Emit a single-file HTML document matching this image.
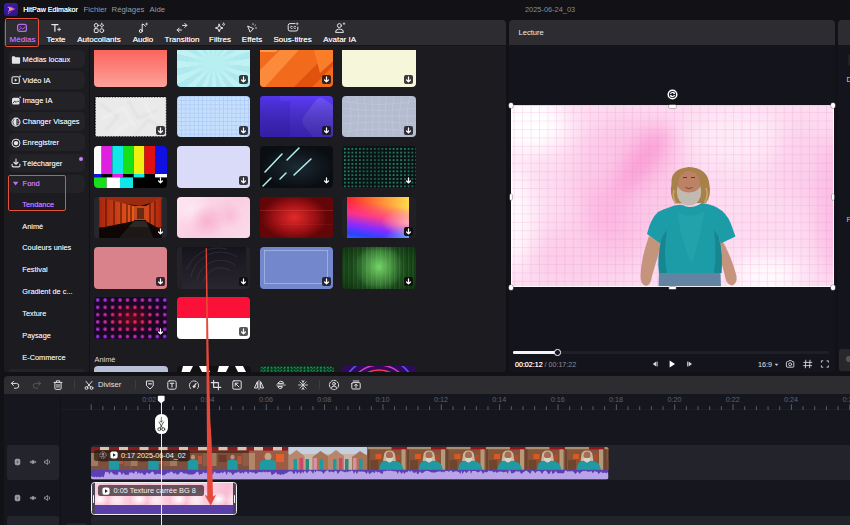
<!DOCTYPE html>
<html lang="fr"><head><meta charset="utf-8"><title>HitPaw Edimakor</title>
<style>
html,body{margin:0;padding:0}
body{width:850px;height:525px;background:#111116;overflow:hidden;position:relative;font-family:"Liberation Sans",sans-serif;color:#e4e4e8;font-size:8px;line-height:1}
.a{position:absolute}
.t{position:absolute;white-space:nowrap;line-height:10px;height:10px}
.c{transform:translateX(-50%)}
.pan{background:#1b1b20}
.bar{background:#2c2c31}
.btn{position:absolute;left:9px;width:76px;height:18.2px;background:#222227;border-radius:5px}
.btn span{text-shadow:0 0 .3px currentColor;position:absolute;left:13.6px;top:4.700px;font-size:7.45px;line-height:10px;color:#dcdce0;white-space:nowrap}
.btn svg{position:absolute;left:1.800px;top:4.400px}
.sub{text-shadow:0 0 .3px currentColor;position:absolute;left:22.3px;white-space:nowrap;font-size:7.35px;line-height:10px;color:#d8d8dc}
.th{position:absolute;width:73.4px;height:41.6px;border-radius:4px;overflow:hidden}
.dl{position:absolute;right:2.4px;bottom:2.6px;width:9px;height:9px;border-radius:2px;background:rgba(18,18,22,.82)}
.tab{text-shadow:0 0 .3px currentColor;position:absolute;top:34.5px;font-size:8px;line-height:10px;color:#ececf0;white-space:nowrap;transform:translateX(-50%)}
.ti{position:absolute;top:22px}
svg{display:block}
.ic{fill:none;stroke:#e8e8ec;stroke-width:1;stroke-linecap:round;stroke-linejoin:round}
</style></head><body>
<div class="a" style="left:4px;top:3px;width:14px;height:13px;border-radius:3px;background:linear-gradient(160deg,#3e1ea4,#2c1480)"></div>
<svg class="a" style="left:4px;top:3px" width="14" height="13" viewBox="0 0 14 13"><path d="M6.400 3.400 L11.400 6 L6.400 8.600 Z" fill="#d24cf0"/><path d="M5 3.800 L9 6 L5 8.200 Z" fill="#ff9a3c"/><circle cx="4.400" cy="4.200" r=".8" fill="#a88cff"/><circle cx="4.600" cy="8.200" r=".6" fill="#a88cff"/><circle cx="4.400" cy="10.200" r=".6" fill="#9a7cf5"/><circle cx="6" cy="9.600" r=".5" fill="#9a7cf5"/></svg>
<div class="t" style="left:23.2px;top:5px;font-size:7.15px;color:#f4f4f7;text-shadow:0 0 .2px #fff">HitPaw Edimakor</div>
<div class="t" style="left:83.5px;top:5px;font-size:7.8px;color:#9a9aa2">Fichier</div>
<div class="t" style="left:111.5px;top:5px;font-size:7.8px;color:#9a9aa2">Réglages</div>
<div class="t" style="left:149.5px;top:5px;font-size:7.8px;color:#9a9aa2">Aide</div>
<div class="t" style="left:525px;top:4.5px;font-size:7.4px;color:#8c8c94">2025-06-24_03</div>
<div class="a pan" style="left:4.300px;top:20px;width:501.700px;height:352px;border-radius:4px 4px 3px 3px"></div>
<div class="a" style="left:88.5px;top:45px;width:1.5px;height:327px;background:#121216"></div>
<div class="th" style="left:94px;top:45.3px;background:linear-gradient(#fb5c54,#fda29a)"></div>
<div class="th" style="left:176.8px;top:45.3px;background:radial-gradient(ellipse 34% 36% at 50% 44%,#b8eff1 35%,rgba(184,239,241,0)),repeating-conic-gradient(from 4deg at 50% 44%,#aeeaed 0 11.25deg,#c2f1f3 11.25deg 22.5deg)"><div class="dl"><svg width="9" height="9" viewBox="0 0 8 8"><path d="M4 1.7V6M2.3 4.4 4 6.1 5.700 4.4" fill="none" stroke="#fff" stroke-width="1.1" stroke-linecap="round" stroke-linejoin="round"/></svg></div></div>
<div class="th" style="left:259.5px;top:45.3px;"><svg width="74" height="42" viewBox="0 0 74 42"><rect width="74" height="42" fill="#f26a1c"/><path d="M-5 30 L30 -5 L48 -5 L5 42 L-5 42Z" fill="#fb8a3a"/><path d="M30 46 L74 2 L74 20 L48 46Z" fill="#e0520e"/><path d="M52 -2 L80 -2 L80 10 L60 28Z" fill="#fa7e2a"/><rect x="-2" y="-2" width="20" height="9" rx="4" fill="#f89a50"/></svg><div class="dl"><svg width="9" height="9" viewBox="0 0 8 8"><path d="M4 1.7V6M2.3 4.4 4 6.1 5.700 4.4" fill="none" stroke="#fff" stroke-width="1.1" stroke-linecap="round" stroke-linejoin="round"/></svg></div></div>
<div class="th" style="left:342.2px;top:45.3px;background:#f5f6da"><div class="dl"><svg width="9" height="9" viewBox="0 0 8 8"><path d="M4 1.7V6M2.3 4.4 4 6.1 5.700 4.4" fill="none" stroke="#fff" stroke-width="1.1" stroke-linecap="round" stroke-linejoin="round"/></svg></div></div>
<div class="th" style="left:94px;top:95.7px;"><svg width="74" height="42" viewBox="0 0 74 42"><defs><filter id="pbl"><feGaussianBlur stdDeviation=".8"/></filter></defs><rect width="74" height="42" fill="#0e0e12"/><rect x="1.300" y="1" width="71" height="39.600" fill="#eaeaea"/><g filter="url(#pbl)" fill="none" stroke-width="1.600"><path d="M6 8 L24 20 L12 34 M34 4 L44 22 L64 14 M40 40 L54 24 L70 32" stroke="#dedede"/><path d="M8 22 L30 12 L40 30 M50 6 L58 20 M20 38 L34 28" stroke="#f2f2f2"/></g><rect x="1.300" y="1" width="71" height="39.600" fill="none" stroke="#0e0e12" stroke-width=".9" stroke-dasharray="1.100 1.700"/></svg><div class="dl"><svg width="9" height="9" viewBox="0 0 8 8"><path d="M4 1.7V6M2.3 4.4 4 6.1 5.700 4.4" fill="none" stroke="#fff" stroke-width="1.1" stroke-linecap="round" stroke-linejoin="round"/></svg></div></div>
<div class="th" style="left:176.8px;top:95.7px;background-color:#c6dffc;background-image:linear-gradient(#aecdf6 .6px,transparent .6px),linear-gradient(90deg,#aecdf6 .6px,transparent .6px);background-size:4.2px 4.2px"><div class="dl"><svg width="9" height="9" viewBox="0 0 8 8"><path d="M4 1.7V6M2.3 4.4 4 6.1 5.700 4.4" fill="none" stroke="#fff" stroke-width="1.1" stroke-linecap="round" stroke-linejoin="round"/></svg></div></div>
<div class="th" style="left:259.5px;top:95.7px;"><svg width="74" height="42" viewBox="0 0 74 42"><defs><linearGradient id="pv" x1="0" y1="0" x2="0" y2="1"><stop offset="0" stop-color="#000" stop-opacity="0"/><stop offset="1" stop-color="#1a0a70" stop-opacity=".55"/></linearGradient></defs><rect width="74" height="42" fill="#5c3cf6"/><path d="M0 0 H20 V3 Q20 5 24 5 H30 V42 H0Z" fill="#5234ea"/><path d="M44 20 L56 4 Q60 0 64 3 L74 10 V42 H54 L44 30 Q41 25 44 20Z" fill="#6e52fb"/><rect width="74" height="42" fill="url(#pv)"/></svg><div class="dl"><svg width="9" height="9" viewBox="0 0 8 8"><path d="M4 1.7V6M2.3 4.4 4 6.1 5.700 4.4" fill="none" stroke="#fff" stroke-width="1.1" stroke-linecap="round" stroke-linejoin="round"/></svg></div></div>
<div class="th" style="left:342.2px;top:95.7px;"><svg width="74" height="42" viewBox="0 0 74 42"><rect width="74" height="42" fill="#b4bcd0"/><g stroke="#c6cde0" stroke-width=".5" fill="none"><path d="M0 5 Q37 12 74 5M0 12 Q37 17 74 12M0 20 H74M0 28 Q37 24 74 28M0 36 Q37 30 74 36"/><path d="M6 0 Q12 21 6 42M14 0 Q19 21 14 42M22 0 Q26 21 22 42M30 0 Q32 21 30 42M37 0V42M44 0 Q42 21 44 42M52 0 Q48 21 52 42M60 0 Q55 21 60 42M68 0 Q62 21 68 42"/></g></svg><div class="dl"><svg width="9" height="9" viewBox="0 0 8 8"><path d="M4 1.7V6M2.3 4.4 4 6.1 5.700 4.4" fill="none" stroke="#fff" stroke-width="1.1" stroke-linecap="round" stroke-linejoin="round"/></svg></div></div>
<div class="th" style="left:94px;top:146.2px;"><svg width="74" height="42" viewBox="0 0 74 42"><rect width="74" height="42" fill="#000"/><rect x="0" width="7.6" height="28" fill="#fff"/><rect x="7.6" width="10.7" height="28" fill="#e020e0"/><rect x="18.3" width="10.7" height="28" fill="#10e8e8"/><rect x="29" width="10.7" height="28" fill="#18e018"/><rect x="39.7" width="10.7" height="28" fill="#f0f010"/><rect x="50.4" width="10.7" height="28" fill="#e01010"/><rect x="61.1" width="13" height="28" fill="#1010e0"/><rect x="0" y="28" width="7.6" height="3.400" fill="#1010e0"/><rect x="18.3" y="28" width="10.7" height="3.400" fill="#e020e0"/><rect x="39.7" y="28" width="10.7" height="3.400" fill="#10e8e8"/><rect x="61.1" y="28" width="13" height="3.400" fill="#fff"/><rect y="31.400" width="12.600" height="10.600" fill="#18e018"/><rect x="12.600" y="31.400" width="13.400" height="10.600" fill="#fff"/><rect x="26" y="31.400" width="13" height="10.600" fill="#10e8e8"/></svg><div class="dl" style="background:transparent"><svg width="9" height="9" viewBox="0 0 8 8"><path d="M4 1.7V6M2.3 4.4 4 6.1 5.700 4.4" fill="none" stroke="#fff" stroke-width="1.1" stroke-linecap="round" stroke-linejoin="round"/></svg></div></div>
<div class="th" style="left:176.8px;top:146.2px;background:#d9dbf8"><div class="dl"><svg width="9" height="9" viewBox="0 0 8 8"><path d="M4 1.7V6M2.3 4.4 4 6.1 5.700 4.4" fill="none" stroke="#fff" stroke-width="1.1" stroke-linecap="round" stroke-linejoin="round"/></svg></div></div>
<div class="th" style="left:259.5px;top:146.2px;"><svg width="74" height="42" viewBox="0 0 74 42"><defs><radialGradient id="g22"><stop offset="0" stop-color="#1c2a32"/><stop offset="1" stop-color="#0a0e12"/></radialGradient></defs><rect width="74" height="42" fill="url(#g22)"/><g stroke="#b4f0f0" stroke-width="1.500" stroke-linecap="round"><path d="M5 26 L22 8M27 14 L39 2M3 40 L11 32M20 33 L26 27M34 29 L51 13"/></g></svg><div class="dl" style="background:transparent"><svg width="9" height="9" viewBox="0 0 8 8"><path d="M4 1.7V6M2.3 4.4 4 6.1 5.700 4.4" fill="none" stroke="#fff" stroke-width="1.1" stroke-linecap="round" stroke-linejoin="round"/></svg></div></div>
<div class="th" style="left:342.2px;top:146.2px;background-color:#0b1216;background-image:linear-gradient(100deg,rgba(11,18,22,0),rgba(11,18,22,.4) 45%,rgba(11,18,22,.05) 70%,rgba(11,18,22,.3)),radial-gradient(circle,#34c888 .5px,transparent .95px);background-size:100% 100%,3.75px 3.75px;background-position:0 0,1px 1px"><div class="dl" style="background:transparent"><svg width="9" height="9" viewBox="0 0 8 8"><path d="M4 1.7V6M2.3 4.4 4 6.1 5.700 4.4" fill="none" stroke="#fff" stroke-width="1.1" stroke-linecap="round" stroke-linejoin="round"/></svg></div></div>
<div class="th" style="left:94px;top:196.7px;"><svg width="74" height="42" viewBox="0 0 74 42"><defs><linearGradient id="tg" x1="0" y1="0" x2="1" y2="0"><stop offset="0" stop-color="#a8240c"/><stop offset="1" stop-color="#e85a1c"/></linearGradient><linearGradient id="tg2" x1="1" y1="0" x2="0" y2="0"><stop offset="0" stop-color="#a8240c"/><stop offset="1" stop-color="#d8481a"/></linearGradient></defs><rect width="74" height="42" fill="#26262b"/><rect x="5.2" width="62.400" height="42" fill="#120806"/><path d="M5.2 0 H67.600 V3 L46 9 L5.2 3Z" fill="#9a2a10"/><path d="M5.2 0 L40 9 V24 L5.2 31Z" fill="url(#tg)"/><path d="M67.600 0 L52 9 V24 L67.600 33Z" fill="url(#tg2)"/><path d="M12 1.800 V30 M20 4 V28.500 M27 5.800 V27 M33 7.200 V25.800 M37 8.200 V25 M61 4 V29 M56 6.800 V26.500" stroke="#5a1206" stroke-width="1.100"/><rect x="40" y="9" width="12" height="14" fill="#c04a1a"/><rect x="43" y="11" width="7" height="11" fill="#6a2a12"/><path d="M40 24 H52 L60 42 H24Z" fill="#2c2826"/><rect x="5.2" y="30" width="62.400" height="12" fill="#0a0504" opacity=".45"/></svg><div class="dl" style="background:transparent"><svg width="9" height="9" viewBox="0 0 8 8"><path d="M4 1.7V6M2.3 4.4 4 6.1 5.700 4.4" fill="none" stroke="#fff" stroke-width="1.1" stroke-linecap="round" stroke-linejoin="round"/></svg></div></div>
<div class="th" style="left:176.8px;top:196.7px;background:radial-gradient(ellipse 24% 40% at 42% 58%,rgba(247,170,203,.75),transparent),radial-gradient(ellipse 18% 32% at 72% 45%,rgba(248,182,210,.7),transparent),radial-gradient(ellipse 30% 40% at 18% 28%,#fde8f2,transparent),linear-gradient(135deg,#fde2ee,#fbcce0 50%,#fcdcea)"></div>
<div class="th" style="left:259.5px;top:196.7px;background:radial-gradient(ellipse 45% 55% at 47% 50%,#e42a2a,#9a1014 65%,#640608)"><div class="a" style="left:0;top:13.500px;width:74px;height:.5px;background:rgba(255,120,110,.2)"></div><div class="a" style="left:20px;top:27px;width:54px;height:.5px;background:rgba(255,110,100,.08)"></div></div>
<div class="th" style="left:342.2px;top:196.7px;background:#202025"><div class="a" style="left:5px;top:0;width:62px;height:41.5px;background:radial-gradient(ellipse 45% 35% at 100% 62%,rgba(255,200,190,.8),transparent),radial-gradient(ellipse 40% 30% at 100% 100%,rgba(90,180,255,.9),transparent),linear-gradient(190deg,transparent 22%,rgba(255,50,150,.85) 50%,#8a2cff 72%,#2a44ff 90%,#2a60ff),linear-gradient(90deg,#ff2028,#ff7a30 45%,#ffdc50)"></div><div class="dl" style="background:#111"><svg width="9" height="9" viewBox="0 0 8 8"><path d="M4 1.7V6M2.3 4.4 4 6.1 5.700 4.4" fill="none" stroke="#fff" stroke-width="1.1" stroke-linecap="round" stroke-linejoin="round"/></svg></div></div>
<div class="th" style="left:94px;top:247px;background:#d9828c"><div class="dl"><svg width="9" height="9" viewBox="0 0 8 8"><path d="M4 1.7V6M2.3 4.4 4 6.1 5.700 4.4" fill="none" stroke="#fff" stroke-width="1.1" stroke-linecap="round" stroke-linejoin="round"/></svg></div></div>
<div class="th" style="left:176.8px;top:247px;"><svg width="74" height="42" viewBox="0 0 74 42"><defs><linearGradient id="g41" x1="0" y1="0" x2="0" y2="1"><stop offset="0" stop-color="#15141c"/><stop offset="1" stop-color="#2b2630"/></linearGradient></defs><rect width="74" height="42" fill="#222227"/><rect x="5" width="64" height="42" fill="url(#g41)"/><g fill="none" stroke="#4a4654" stroke-width=".45"><path d="M14 30 A30 30 0 0 1 60 10"/><path d="M20 34 A24 24 0 0 1 58 18"/><path d="M26 36 A18 18 0 0 1 54 24"/><path d="M10 22 A34 34 0 0 1 50 2"/></g></svg><div class="dl" style="background:#111"><svg width="9" height="9" viewBox="0 0 8 8"><path d="M4 1.7V6M2.3 4.4 4 6.1 5.700 4.4" fill="none" stroke="#fff" stroke-width="1.1" stroke-linecap="round" stroke-linejoin="round"/></svg></div></div>
<div class="th" style="left:259.5px;top:247px;"><svg width="74" height="42" viewBox="0 0 74 42"><rect width="74" height="42" fill="#7388cc"/><rect x="4.5" y="3.5" width="63" height="33" fill="none" stroke="#b8c6ee" stroke-width=".6"/></svg><div class="dl"><svg width="9" height="9" viewBox="0 0 8 8"><path d="M4 1.7V6M2.3 4.4 4 6.1 5.700 4.4" fill="none" stroke="#fff" stroke-width="1.1" stroke-linecap="round" stroke-linejoin="round"/></svg></div></div>
<div class="th" style="left:342.2px;top:247px;background:radial-gradient(ellipse 70% 90% at 50% 50%,transparent 45%,rgba(2,16,2,.7)),radial-gradient(ellipse 32% 60% at 50% 47%,#74d468,transparent),repeating-linear-gradient(90deg,#1c4c1c 0 1.5px,#2a642a 1.5px 2.6px,#205420 2.6px 4.6px)"><div class="dl" style="background:#111"><svg width="9" height="9" viewBox="0 0 8 8"><path d="M4 1.7V6M2.3 4.4 4 6.1 5.700 4.4" fill="none" stroke="#fff" stroke-width="1.1" stroke-linecap="round" stroke-linejoin="round"/></svg></div></div>
<div class="th" style="left:94px;top:297.4px;"><svg width="74" height="42" viewBox="0 0 74 42"><defs><radialGradient id="dg" cx=".5" cy=".5" r=".6"><stop offset="0" stop-color="#f02030"/><stop offset=".45" stop-color="#e02868"/><stop offset="1" stop-color="#9a30f0"/></radialGradient><radialGradient id="dgc"><stop offset="0" stop-color="#6a0c20" stop-opacity=".7"/><stop offset="1" stop-color="#6a0c20" stop-opacity="0"/></radialGradient><pattern id="dp" width="7.45" height="7.3" x="0" y="-.6" patternUnits="userSpaceOnUse"><circle cx="3.7" cy="3.6" r="1.800" fill="#fff"/></pattern><mask id="dm"><rect width="74" height="42" fill="url(#dp)"/></mask><filter id="dgl"><feGaussianBlur stdDeviation=".7"/></filter></defs><rect width="74" height="42" fill="#1a0724"/><ellipse cx="37" cy="21" rx="22" ry="15" fill="url(#dgc)"/><g filter="url(#dgl)"><rect width="74" height="42" fill="url(#dg)" mask="url(#dm)"/></g></svg><div class="dl" style="background:transparent"><svg width="9" height="9" viewBox="0 0 8 8"><path d="M4 1.7V6M2.3 4.4 4 6.1 5.700 4.4" fill="none" stroke="#fff" stroke-width="1.1" stroke-linecap="round" stroke-linejoin="round"/></svg></div></div>
<div class="th" style="left:176.8px;top:297.4px;background:linear-gradient(#fb1038 0 49%,#fff 49%)"><div class="dl" style="background:#55555a"><svg width="9" height="9" viewBox="0 0 8 8"><path d="M4 1.7V6M2.3 4.4 4 6.1 5.700 4.4" fill="none" stroke="#fff" stroke-width="1.1" stroke-linecap="round" stroke-linejoin="round"/></svg></div></div>
<div class="t" style="left:94.5px;top:355px;font-size:7.4px;color:#dcdce0">Animé</div>
<div class="a" style="left:94px;top:366px;width:74px;height:6px;border-radius:4px 4px 0 0;overflow:hidden;background:#b8c0d8"></div>
<div class="a" style="left:176.8px;top:366px;width:74px;height:6px;border-radius:4px 4px 0 0;overflow:hidden;background:#111"><svg width="74" height="8" viewBox="0 0 74 8"><path d="M6 0 H16 L12 8 H4Z M22 0 H30 L34 8 H26Z M42 0 H52 L48 8 H40Z M58 0 H66 L70 8 H62Z" fill="#fff"/></svg></div>
<div class="a" style="left:259.5px;top:366px;width:74px;height:6px;border-radius:4px 4px 0 0;overflow:hidden;background:#0a2c1a"><div class="a" style="inset:0;background-image:radial-gradient(circle,#1e9a58 .6px,transparent 1.1px),radial-gradient(circle,#147a44 .7px,transparent 1.2px);background-size:3.3px 2.9px,4.1px 3.1px;background-position:0 0,1.5px 1px"></div></div>
<div class="a" style="left:342.2px;top:366px;width:74px;height:6px;border-radius:4px 4px 0 0;overflow:hidden;background:#300a5c"><svg width="74" height="8" viewBox="0 0 74 8"><circle cx="37" cy="30" r="26" fill="none" stroke="#ff3a4a" stroke-width="1.600"/><circle cx="37" cy="30" r="31" fill="none" stroke="#d040c0" stroke-width="1.600"/><circle cx="37" cy="30" r="38" fill="none" stroke="#5a50ff" stroke-width="1.600"/></svg></div>
<div class="a bar" style="left:4.300px;top:20px;width:501.700px;height:25px;border-radius:4px 4px 0 0"></div><div class="a" style="left:4.300px;top:45px;width:501.700px;height:1px;background:#141419"></div>
<div class="a pan" style="left:90px;top:46px;width:416px;height:4px"></div>
<div class="tab" style="left:22.5px;color:#b868f2">Médias</div>
<div class="tab" style="left:56px">Texte</div>
<div class="tab" style="left:99px">Autocollants</div>
<div class="tab" style="left:143px">Audio</div>
<div class="tab" style="left:182px">Transition</div>
<div class="tab" style="left:220px">Filtres</div>
<div class="tab" style="left:252px">Effets</div>
<div class="tab" style="left:292.6px">Sous-titres</div>
<div class="tab" style="left:339.7px">Avatar IA</div>
<svg class="ti" style="left:16.3px" width="12" height="12" viewBox="0 0 12 12" fill="none" stroke="#b868f2" stroke-width="1" stroke-linecap="round" stroke-linejoin="round"><rect x="1.600" y="2.400" width="8.800" height="7" rx="2" stroke-width="1.300"/><path d="M3.200 7.800 L5.200 5.800 L6.800 7 L8.800 5.200" stroke-width=".9"/><circle cx="4.200" cy="4.600" r=".6" fill="#b868f2" stroke="none"/></svg>
<svg class="ti" style="left:50px" width="12" height="12" viewBox="0 0 12 12" fill="none" stroke="#e8e8ec" stroke-width="1" stroke-linecap="round" stroke-linejoin="round"><path d="M1.8 2.6 H8 M4.9 2.6 V9.2" stroke-width="1.2"/><path d="M7.6 7.4 H10.6 M9.1 5.9 V8.9" stroke-width=".9"/></svg>
<svg class="ti" style="left:93px" width="12" height="12" viewBox="0 0 12 12" fill="none" stroke="#e8e8ec" stroke-width="1" stroke-linecap="round" stroke-linejoin="round"><circle cx="3.2" cy="3.4" r="1.9"/><path d="M8.8 1.2 L9.4 2.8 L11 3.4 L9.4 4 L8.8 5.6 L8.2 4 L6.6 3.4 L8.2 2.8Z" stroke-width=".7"/><rect x="1.3" y="6.7" width="3.8" height="3.8" rx=".8"/><circle cx="8.8" cy="8.6" r="1.9"/></svg>
<svg class="ti" style="left:137px" width="12" height="12" viewBox="0 0 12 12" fill="none" stroke="#e8e8ec" stroke-width="1" stroke-linecap="round" stroke-linejoin="round"><path d="M5.2 9 V2 Q7.4 2.2 8.4 4.2"/><circle cx="3.8" cy="9" r="1.5"/><path d="M9.6 1 V3 M8.6 2 H10.6" stroke-width=".7"/></svg>
<svg class="ti" style="left:176px" width="12" height="12" viewBox="0 0 12 12" fill="none" stroke="#e8e8ec" stroke-width="1" stroke-linecap="round" stroke-linejoin="round"><path d="M6.5 3.4 H10.8 M8.8 1.4 L10.8 3.4 L8.8 5.4"/><path d="M5.5 8 H1.2 M3.2 6 L1.2 8 L3.2 10"/></svg>
<svg class="ti" style="left:214px" width="12" height="12" viewBox="0 0 12 12" fill="none" stroke="#e8e8ec" stroke-width="1" stroke-linecap="round" stroke-linejoin="round"><path d="M5.2 2.2 L6.2 5 L9 6 L6.2 7 L5.2 9.8 L4.2 7 L1.4 6 L4.2 5Z"/><path d="M9.6 1 L10 2 L11 2.4 L10 2.8 L9.6 3.8 L9.2 2.8 L8.2 2.4 L9.2 2Z" stroke-width=".6"/></svg>
<svg class="ti" style="left:246px" width="12" height="12" viewBox="0 0 12 12" fill="none" stroke="#e8e8ec" stroke-width="1" stroke-linecap="round" stroke-linejoin="round"><path d="M2 4.2 L7.6 6.6 L4.4 9.8Z"/><path d="M7 1.6 V2.8 M9.6 3 L8.8 3.8 M10.6 6 H9.4" stroke-width=".8"/></svg>
<svg class="ti" style="left:286.6px" width="12" height="12" viewBox="0 0 12 12" fill="none" stroke="#e8e8ec" stroke-width="1" stroke-linecap="round" stroke-linejoin="round"><path d="M8 1.6 H3 Q1.2 1.6 1.2 3.4 V7.2 Q1.2 9 3 9 H9 Q10.8 9 10.8 7.2 V5"/><path d="M5.2 4.4 Q3.4 3.6 3.4 5.4 Q3.4 7 5.2 6.4 M8.6 4.4 Q6.8 3.6 6.8 5.4 Q6.8 7 8.6 6.4" stroke-width=".8"/><path d="M10.2 .8 V2.8 M9.2 1.8 H11.2" stroke-width=".7"/></svg>
<svg class="ti" style="left:333.7px" width="12" height="12" viewBox="0 0 12 12" fill="none" stroke="#e8e8ec" stroke-width="1" stroke-linecap="round" stroke-linejoin="round"><circle cx="5.4" cy="3.6" r="2"/><path d="M1.6 10 Q1.6 7.2 4.4 7.2 H6.6 Q9.4 7.2 9.4 10 Z"/><path d="M10 .8 V2.6 M9.1 1.7 H10.9" stroke-width=".7"/></svg>
<div class="a" style="left:5.2px;top:17.900px;width:31.6px;height:27.2px;border:1.800px solid #e6503c;border-radius:2px;box-sizing:content-box"></div>
<div class="btn" style="top:50.30px"><svg width="10" height="10" viewBox="0 0 9 9"><path d="M.8 2 Q.8 1.2 1.6 1.2 H3.2 L4 2 H7.4 Q8.2 2 8.2 2.8 V7 Q8.2 7.8 7.4 7.8 H1.6 Q.8 7.8 .8 7Z" fill="#e4e4e8"/></svg><span>Médias locaux</span></div>
<div class="btn" style="top:71.02px"><svg width="10" height="10" viewBox="0 0 9 9"><rect x=".9" y="1.6" width="6.6" height="6" rx="1.4" fill="none" stroke="#e4e4e8" stroke-width="1"/><path d="M3.4 3.2 V6 L5.6 4.6Z" fill="#e4e4e8"/><path d="M8.2 .4 V2 M7.4 1.2 H9" stroke="#e4e4e8" stroke-width=".6"/></svg><span>Vidéo IA</span></div>
<div class="btn" style="top:91.74px"><svg width="10" height="10" viewBox="0 0 9 9"><rect x=".9" y="1.6" width="6.8" height="6" rx="1.4" fill="#e4e4e8"/><path d="M1.6 6.6 L3.4 4.6 L4.6 5.8 L6 4.4 L7.2 5.6" stroke="#232328" stroke-width=".8" fill="none"/><path d="M8.2 .4 V2 M7.4 1.2 H9" stroke="#e4e4e8" stroke-width=".6"/></svg><span>Image IA</span></div>
<div class="btn" style="top:112.46px"><svg width="10" height="10" viewBox="0 0 9 9"><circle cx="4.5" cy="4.6" r="3.6" fill="none" stroke="#e4e4e8" stroke-width="1"/><path d="M4.5 1 V8.2" stroke="#e4e4e8" stroke-width=".8"/><path d="M4.5 1.4 A3.3 3.3 0 0 0 4.5 7.8Z" fill="#e4e4e8"/><path d="M5.6 3.6 H7 M5.6 5.6 H7" stroke="#e4e4e8" stroke-width=".7"/></svg><span>Changer Visages</span></div>
<div class="btn" style="top:133.18px"><svg width="10" height="10" viewBox="0 0 9 9"><circle cx="4.5" cy="4.6" r="3.6" fill="none" stroke="#e4e4e8" stroke-width=".9"/><circle cx="4.5" cy="4.6" r="2" fill="#e4e4e8"/></svg><span>Enregistrer</span></div>
<div class="btn" style="top:153.90px"><svg width="10" height="10" viewBox="0 0 9 9"><path d="M4.5 1 V5.4 M2.6 3.8 L4.5 5.6 L6.4 3.8" fill="none" stroke="#e4e4e8" stroke-width="1" stroke-linecap="round" stroke-linejoin="round"/><path d="M1 5.6 V7 Q1 8 2 8 H7 Q8 8 8 7 V5.6" fill="none" stroke="#e4e4e8" stroke-width="1" stroke-linecap="round"/></svg><span>Télécharger</span></div>
<div class="a" style="left:78.5px;top:156.5px;width:4px;height:4px;border-radius:2px;background:#d080f0"></div>
<div class="btn" style="top:174.6px"><svg width="9" height="9" viewBox="0 0 9 9"><path d="M1.800 2.800 H7.400 L4.600 6.400Z" fill="#c070f5"/></svg><span style="color:#c070f5;top:4.500px">Fond</span></div>
<div class="sub" style="top:199.70px;color:#c070f5">Tendance</div>
<div class="sub" style="top:221.55px">Animé</div>
<div class="sub" style="top:243.40px">Couleurs unies</div>
<div class="sub" style="top:265.25px">Festival</div>
<div class="sub" style="top:287.10px">Gradient de c...</div>
<div class="sub" style="top:308.95px">Texture</div>
<div class="sub" style="top:330.80px">Paysage</div>
<div class="sub" style="top:352.65px">E-Commerce</div>
<div class="a" style="left:8.2px;top:175.2px;width:56px;height:33.800px;border:1.5px solid #e4523c;border-radius:2px"></div>
<div class="a" style="left:9px;top:369px;width:76px;height:3px;background:#232328;border-radius:3px 3px 0 0"></div>
<div class="a" style="left:509px;top:20px;width:325.700px;height:352px;border-radius:4px 4px 3px 3px;background:#14151c"></div>
<div class="a bar" style="left:509px;top:20px;width:325.700px;height:25px;border-radius:4px 4px 0 0"></div>
<div class="t" style="left:518.5px;top:28px;font-size:7.6px;color:#ececf0">Lecture</div>
<div class="a" style="left:838px;top:20px;width:13px;height:352px;border-radius:4px 0 0 3px;background:#14151c"></div>
<div class="a bar" style="left:838px;top:20px;width:13px;height:25px;border-radius:4px 0 0 0"></div>
<div class="a" style="left:847.5px;top:54px;width:6px;height:12px;border-radius:2px 0 0 2px;background:#222228"></div>
<div class="t" style="left:846.5px;top:75px;font-size:7.6px;color:#d0d0d6">D</div>
<div class="t" style="left:846.5px;top:215px;font-size:7.6px;color:#c0c0c6">F</div>
<div class="a" style="left:838.5px;top:348.5px;width:13px;height:22px;border-radius:3px 0 0 3px;background:#28282c"></div><div class="a" style="left:846px;top:356px;width:6px;height:6px;border-radius:3px;background:#55555a"></div>
<svg class="a" style="left:510.7px;top:105.7px" width="323" height="181.5" viewBox="0 0 323 181.5">
<defs>
<pattern id="pgrid" width="8.44" height="8.44" x="2.7" y="6.1" patternUnits="userSpaceOnUse"><path d="M0 0 V8.44 M0 0 H8.44" stroke="#ee84c6" stroke-width="1" fill="none" opacity=".38"/></pattern>
<filter id="bb" x="-50%" y="-50%" width="200%" height="200%"><feGaussianBlur stdDeviation="11"/></filter>
<clipPath id="vc"><rect width="323" height="181.5"/></clipPath>
<filter id="bl"><feGaussianBlur stdDeviation=".6"/></filter>
</defs>
<g clip-path="url(#vc)"><rect width="323" height="181.5" fill="#fddcf1"/>
<g filter="url(#bb)">
<ellipse cx="118" cy="80" rx="58" ry="70" fill="#fbb8e0" opacity=".55"/>
<ellipse cx="132" cy="54" rx="13" ry="42" transform="rotate(37 132 54)" fill="#fa96d2" opacity=".95"/>
<ellipse cx="98" cy="112" rx="20" ry="34" fill="#fbaadc" opacity=".6"/>
<ellipse cx="70" cy="150" rx="60" ry="30" fill="#fbc0e4" opacity=".5"/>
<ellipse cx="332" cy="100" rx="28" ry="70" fill="#fba6dc" opacity=".6"/>
<ellipse cx="290" cy="60" rx="30" ry="40" fill="#fbc0e6" opacity=".4"/>
<ellipse cx="14" cy="18" rx="44" ry="30" fill="#fff"/>
<ellipse cx="0" cy="112" rx="22" ry="55" fill="#fff" opacity=".9"/>
<ellipse cx="255" cy="170" rx="36" ry="20" fill="#fff" opacity=".9"/>
<ellipse cx="225" cy="30" rx="45" ry="30" fill="#fff" opacity=".4"/>
</g>
<rect width="323" height="181.5" fill="url(#pgrid)"/></g>
<g filter="url(#bl)">
<path d="M138 130 Q130 152 129.500 170 Q129.500 179 135 180 Q140 179 141 170 L151 136Z" fill="#c4947c"/>
<path d="M211 134 Q221 152 225.500 170 Q226.500 178 221 179.500 Q215 178.500 214 170 L206 140Z" fill="#c4947c"/>
<path d="M148 165 H209.500 L210 182 H147.500Z" fill="#6483a2"/>
<path d="M158 101.500 Q165 98 171.500 99 Q180 104 190.800 97 Q200 98 206 101.500 Q216 107 220 118 L224.500 130.500 L209.500 137.500 L208 131 Q212 150 210.500 167 H148 Q146 150 151 131 L149.500 137.500 L136 128 Q140 112 147 106 Q152 103 158 101.500Z" fill="#1c9ca6"/>
<path d="M151 131 Q146 150 148 167 H156 Q152 148 156 124Z M208 131 Q212 150 210.500 167 H203 Q206 148 203 124Z" fill="#147e88" opacity=".7"/>
<path d="M166 106 Q180 114 194 104 Q188 136 181 158 Q170 136 166 106Z" fill="#24aab2" opacity=".5"/>
<path d="M160.500 78 Q159 63 178 61 Q197 62 198.500 79 Q200.500 90 195 97 L164 97.500 Q158 89 160.500 78Z" fill="#a88048"/>
<path d="M163 84 Q161 92 165 97 M195 82 Q198 90 193.500 96.500" stroke="#c8a468" stroke-width="1.600" fill="none"/>
<ellipse cx="178" cy="77.500" rx="10.800" ry="12.500" fill="#bd8266"/>
<path d="M166.500 80 Q170 86.500 178 86.500 Q186 86.500 189.500 80 Q192 92 184.500 98 Q178 101 171.500 98 Q164 92 166.500 80Z" fill="#c2bab0"/>
<path d="M172 71.500 h4 M180 71.500 h4" stroke="#5a3a28" stroke-width="1"/>
<path d="M174.500 81.500 Q178 83.500 181.500 81.500" stroke="#7a4a38" stroke-width="1" fill="none"/>
</g>
</svg>
<div class="a" style="left:510.5px;top:105.300px;width:323.400px;height:182.200px;border:0.8px solid rgba(255,255,255,.85);box-sizing:border-box"></div>
<div class="a" style="left:508.8px;top:103.3px;width:4.4px;height:4.4px;border-radius:3px;background:#fff;box-shadow:0 0 0 .5px #888"></div>
<div class="a" style="left:830.8px;top:103.3px;width:4.4px;height:4.4px;border-radius:3px;background:#fff;box-shadow:0 0 0 .5px #888"></div>
<div class="a" style="left:508.8px;top:285.3px;width:4.4px;height:4.4px;border-radius:3px;background:#fff;box-shadow:0 0 0 .5px #888"></div>
<div class="a" style="left:830.8px;top:285.3px;width:4.4px;height:4.4px;border-radius:3px;background:#fff;box-shadow:0 0 0 .5px #888"></div>
<div class="a" style="left:668.7px;top:105.0px;width:7px;height:2.8px;border-radius:1px;background:#fff;box-shadow:0 0 0 .5px #888"></div>
<div class="a" style="left:668.7px;top:286.5px;width:7px;height:2.8px;border-radius:1px;background:#fff;box-shadow:0 0 0 .5px #888"></div>
<div class="a" style="left:509.7px;top:193.5px;width:2.6px;height:6px;border-radius:1px;background:#fff;box-shadow:0 0 0 .5px #888"></div>
<div class="a" style="left:831.7px;top:193.5px;width:2.6px;height:6px;border-radius:1px;background:#fff;box-shadow:0 0 0 .5px #888"></div>
<svg class="a" style="left:666.500px;top:88.500px" width="11" height="11" viewBox="0 0 11 11"><circle cx="5.500" cy="5.500" r="4.300" fill="#1a1a20" stroke="#fff" stroke-width="1.500"/><path d="M3.500 5 A2.100 2.100 0 0 1 7.300 4.400 M7.500 6 A2.100 2.100 0 0 1 3.700 6.600" fill="none" stroke="#fff" stroke-width="1.100"/><path d="M7.900 3.200 V5 H6.100Z M3.100 7.800 V6 H4.900Z" fill="#fff"/></svg>
<div class="a" style="left:513px;top:351.3px;width:316px;height:2.4px;border-radius:1.2px;background:#1f2027"></div>
<div class="a" style="left:513px;top:351.3px;width:44px;height:2.4px;border-radius:1.2px;background:#f4f4f8"></div>
<div class="a" style="left:554.3px;top:349.3px;width:6.4px;height:6.4px;border-radius:3.2px;background:#14151c;border:1.5px solid #f4f4f8;box-sizing:border-box"></div>
<div class="t" style="left:515px;top:359.800px;font-size:7.1px;color:#f6f6fa;text-shadow:0 0 .3px #fff">00:02:12 <span style="color:#8c8c94;text-shadow:none">/ 00:17:22</span></div>
<svg class="a" style="left:650px;top:359px" width="46" height="10" viewBox="0 0 46 10"><path d="M6.2 2.6 V7.4 L2.8 5Z" fill="#d8d8dc"/><rect x="6.6" y="2.6" width="1" height="4.8" fill="#d8d8dc"/><path d="M19.6 1.6 V8.4 L25 5Z" fill="#fff"/><path d="M38.6 2.6 V7.4 L42 5Z" fill="#d8d8dc"/><rect x="37.2" y="2.6" width="1" height="4.8" fill="#d8d8dc"/></svg>
<div class="t" style="left:758px;top:359.600px;font-size:7.2px;color:#e0e0e4">16:9</div>
<svg class="a" style="left:774px;top:362.5px" width="5" height="4" viewBox="0 0 5 4"><path d="M.6 .8 H4.4 L2.5 3Z" fill="#c8c8cc"/></svg>
<svg class="a" style="left:785px;top:359px" width="46" height="10" viewBox="0 0 46 10" fill="none" stroke="#d8d8dc" stroke-width=".9" stroke-linejoin="round" stroke-linecap="round"><path d="M1.4 3.4 Q1.4 2.6 2.2 2.6 H3.4 L4 1.6 H6.4 L7 2.6 H8 Q8.8 2.6 8.8 3.4 V7.4 Q8.8 8.2 8 8.2 H2.2 Q1.4 8.2 1.4 7.4Z"/><circle cx="5.1" cy="5.3" r="1.5"/><path d="M20.8 1.2 L20.4 8.8 M25 1.2 L24.6 8.8 M18.8 3.4 H26.8 M18.6 6.6 H26.6"/><path d="M36.4 3.2 V1.8 H37.8 M42 1.8 H43.4 V3.2 M43.4 6.8 V8.2 H42 M37.8 8.2 H36.4 V6.8" /></svg>
<div class="a" style="left:4px;top:375.500px;width:846px;height:150px;border-radius:4px 0 0 0;background:#16171e"></div>
<div class="a" style="left:4px;top:375.500px;width:846px;height:18.600px;border-radius:4px 0 0 0;background:#2c2c31"></div>
<div class="a" style="left:60px;top:394px;width:1px;height:131px;background:#111116"></div>
<svg class="a" style="left:9.0px;top:378.5px" width="12" height="12" viewBox="0 0 12 12" fill="none" stroke="#e0e0e4" stroke-width="1" stroke-linecap="round" stroke-linejoin="round"><path d="M2.4 4.4 H7.4 Q9.8 4.4 9.8 6.8 Q9.8 9.2 7.4 9.2 H5.4 M4.4 2.4 L2.4 4.4 L4.4 6.4"/></svg>
<svg class="a" style="left:31.0px;top:378.5px" width="12" height="12" viewBox="0 0 12 12" fill="none" stroke="#55555c" stroke-width="1" stroke-linecap="round" stroke-linejoin="round"><path d="M9.6 4.4 H4.6 Q2.2 4.4 2.2 6.8 Q2.2 9.2 4.6 9.2 H6.6 M7.6 2.4 L9.6 4.4 L7.6 6.4"/></svg>
<svg class="a" style="left:52.0px;top:378.5px" width="12" height="12" viewBox="0 0 12 12" fill="none" stroke="#e0e0e4" stroke-width="1" stroke-linecap="round" stroke-linejoin="round"><path d="M2 3.4 H10 M4.4 3.2 V1.8 H7.6 V3.2 M2.9 3.6 V9.4 Q2.9 10.4 3.9 10.4 H8.1 Q9.1 10.4 9.1 9.4 V3.6 M5 5.4 V8.4 M7 5.4 V8.4"/></svg>
<svg class="a" style="left:83.0px;top:378.5px" width="12" height="12" viewBox="0 0 12 12" fill="none" stroke="#e0e0e4" stroke-width="1" stroke-linecap="round" stroke-linejoin="round"><circle cx="3.500" cy="9" r="1.400"/><circle cx="8.500" cy="9" r="1.400"/><path d="M4.400 7.900 L9 2.400 M7.600 7.900 L3 2.400"/></svg>
<svg class="a" style="left:144.0px;top:378.5px" width="12" height="12" viewBox="0 0 12 12" fill="none" stroke="#e0e0e4" stroke-width="1" stroke-linecap="round" stroke-linejoin="round"><path d="M2.8 2 H9.2 V7 L6 10 L2.8 7Z"/><path d="M4.6 4.8 H7.4" stroke-width="1.2"/></svg>
<svg class="a" style="left:166.0px;top:378.5px" width="12" height="12" viewBox="0 0 12 12" fill="none" stroke="#e0e0e4" stroke-width="1" stroke-linecap="round" stroke-linejoin="round"><rect x="1.8" y="1.8" width="8.4" height="8.4" rx="1.8"/><path d="M4.2 4.2 H7.8 M6 4.2 V8" stroke-width="1.1"/></svg>
<svg class="a" style="left:188.0px;top:378.5px" width="12" height="12" viewBox="0 0 12 12" fill="none" stroke="#e0e0e4" stroke-width="1" stroke-linecap="round" stroke-linejoin="round"><path d="M2.6 9.6 A4.6 4.6 0 1 1 9.4 9.6" stroke-dasharray="2.2 1.1"/><path d="M6 7.4 L8 4.6" stroke-width="1.2"/><circle cx="6" cy="7.6" r=".9" fill="#e0e0e4"/></svg>
<svg class="a" style="left:210.2px;top:378.5px" width="12" height="12" viewBox="0 0 12 12" fill="none" stroke="#e0e0e4" stroke-width="1" stroke-linecap="round" stroke-linejoin="round"><path d="M3.6 1.2 V8.4 H10.8 M1.2 3.6 H8.4 V10.8" stroke-width="1.1"/></svg>
<svg class="a" style="left:231.0px;top:378.5px" width="12" height="12" viewBox="0 0 12 12" fill="none" stroke="#e0e0e4" stroke-width="1" stroke-linecap="round" stroke-linejoin="round"><rect x="1.8" y="1.8" width="8.4" height="8.4" rx="1.2"/><path d="M4.2 4.2 L8 8 M4.2 7 V4.2 H7" /></svg>
<svg class="a" style="left:253.0px;top:378.5px" width="12" height="12" viewBox="0 0 12 12" fill="none" stroke="#e0e0e4" stroke-width="1" stroke-linecap="round" stroke-linejoin="round"><path d="M6 1.4 V10.6" stroke-width=".8"/><path d="M4.4 3 V9 H1.8Z M7.6 3 V9 H10.2Z"/></svg>
<svg class="a" style="left:275.0px;top:378.5px" width="12" height="12" viewBox="0 0 12 12" fill="none" stroke="#e0e0e4" stroke-width="1" stroke-linecap="round" stroke-linejoin="round"><path d="M1.6 6 H10.4" stroke-width=".8"/><path d="M3 4.4 H8.6 Q8.6 2 5.6 2.2Z M3 7.6 H7.4 Q7.4 9.6 5 9.6Z"/></svg>
<svg class="a" style="left:297.0px;top:378.5px" width="12" height="12" viewBox="0 0 12 12" fill="none" stroke="#e0e0e4" stroke-width="1" stroke-linecap="round" stroke-linejoin="round"><path d="M6 1.4 V10.6 M1.4 6 H10.6 M2.8 2.8 L9.2 9.2 M9.2 2.8 L2.8 9.2 M4.8 1.8 L6 3 L7.2 1.8 M4.8 10.2 L6 9 L7.2 10.2" stroke-width=".8"/></svg>
<svg class="a" style="left:328.0px;top:378.5px" width="12" height="12" viewBox="0 0 12 12" fill="none" stroke="#e0e0e4" stroke-width="1" stroke-linecap="round" stroke-linejoin="round"><circle cx="6" cy="6" r="4.6" stroke-dasharray="2 1"/><circle cx="6" cy="4.8" r="1.4"/><path d="M3.4 9 Q3.6 7 6 7 Q8.4 7 8.6 9"/></svg>
<svg class="a" style="left:350.0px;top:378.5px" width="12" height="12" viewBox="0 0 12 12" fill="none" stroke="#e0e0e4" stroke-width="1" stroke-linecap="round" stroke-linejoin="round"><path d="M1.8 4.6 V9 Q1.8 10 2.8 10 H9.2 Q10.2 10 10.2 9 V4.6 Q10.2 3.6 9.2 3.6 H2.8 Q1.8 3.6 1.8 4.6Z M3.2 2 H8.8 M6 5.4 V8.6 M4.6 6.6 L6 5.2 L7.4 6.6"/></svg>
<div class="t" style="left:98px;top:379.5px;font-size:7.6px;color:#e4e4e8">Diviser</div>
<div class="a" style="left:74px;top:380px;width:1px;height:9px;background:#3c3c42"></div>
<div class="a" style="left:135px;top:380px;width:1px;height:9px;background:#3c3c42"></div>
<div class="a" style="left:319px;top:380px;width:1px;height:9px;background:#3c3c42"></div>
<div class="a" style="left:61px;top:409.400px;width:790px;height:.8px;background:#1c1d24"></div>
<svg class="a" style="left:0;top:403.5px" width="850" height="6" viewBox="0 0 850 6"><path d="M91.20 0.300V6M102.87 2.2V6M114.54 2.2V6M126.21 2.2V6M137.88 2.2V6M149.55 0.300V6M161.22 2.2V6M172.89 2.2V6M184.56 2.2V6M196.23 2.2V6M207.90 0.300V6M219.57 2.2V6M231.24 2.2V6M242.91 2.2V6M254.58 2.2V6M266.25 0.300V6M277.92 2.2V6M289.59 2.2V6M301.26 2.2V6M312.93 2.2V6M324.60 0.300V6M336.27 2.2V6M347.94 2.2V6M359.61 2.2V6M371.28 2.2V6M382.95 0.300V6M394.62 2.2V6M406.29 2.2V6M417.96 2.2V6M429.63 2.2V6M441.30 0.300V6M452.97 2.2V6M464.64 2.2V6M476.31 2.2V6M487.98 2.2V6M499.65 0.300V6M511.32 2.2V6M522.99 2.2V6M534.66 2.2V6M546.33 2.2V6M558.00 0.300V6M569.67 2.2V6M581.34 2.2V6M593.01 2.2V6M604.68 2.2V6M616.35 0.300V6M628.02 2.2V6M639.69 2.2V6M651.36 2.2V6M663.03 2.2V6M674.70 0.300V6M686.37 2.2V6M698.04 2.2V6M709.71 2.2V6M721.38 2.2V6M733.05 0.300V6M744.72 2.2V6M756.39 2.2V6M768.06 2.2V6M779.73 2.2V6M791.40 0.300V6M803.07 2.2V6M814.74 2.2V6M826.41 2.2V6M838.08 2.2V6M849.75 0.300V6" stroke="#5c5c64" stroke-width="1" fill="none"/></svg>
<div class="t c" style="left:149.2px;top:395px;font-size:7.2px;color:#62626c">0:02</div>
<div class="t c" style="left:207.6px;top:395px;font-size:7.2px;color:#62626c">0:04</div>
<div class="t c" style="left:265.9px;top:395px;font-size:7.2px;color:#62626c">0:06</div>
<div class="t c" style="left:324.3px;top:395px;font-size:7.2px;color:#62626c">0:08</div>
<div class="t c" style="left:382.6px;top:395px;font-size:7.2px;color:#62626c">0:10</div>
<div class="t c" style="left:441.0px;top:395px;font-size:7.2px;color:#62626c">0:12</div>
<div class="t c" style="left:499.3px;top:395px;font-size:7.2px;color:#62626c">0:14</div>
<div class="t c" style="left:557.7px;top:395px;font-size:7.2px;color:#62626c">0:16</div>
<div class="t c" style="left:616.1px;top:395px;font-size:7.2px;color:#62626c">0:18</div>
<div class="t c" style="left:674.4px;top:395px;font-size:7.2px;color:#62626c">0:20</div>
<div class="t c" style="left:732.8px;top:395px;font-size:7.2px;color:#62626c">0:22</div>
<div class="t c" style="left:791.1px;top:395px;font-size:7.2px;color:#62626c">0:24</div>
<div class="t c" style="left:849.5px;top:395px;font-size:7.2px;color:#62626c">0:26</div>
<div class="a" style="left:6.5px;top:445px;width:52.5px;height:35px;border-radius:3px;background:#24252c"></div>
<div class="a" style="left:91px;top:445px;width:760px;height:35px;border-radius:3px 0 0 3px;background:#23242b"></div>
<div class="a" style="left:6.5px;top:516.400px;width:52.5px;height:10px;border-radius:3px;background:#24252c"></div>
<div class="a" style="left:91px;top:516.400px;width:760px;height:10px;border-radius:3px 0 0 3px;background:#23242b"></div>
<div class="a" style="left:65.5px;top:522.5px;width:21px;height:6px;border-radius:2.5px;background:#222227"></div>
<svg class="a" style="left:12px;top:457.3px" width="44" height="10" viewBox="0 0 44 10" fill="none" stroke="#a8a8b0" stroke-width=".8" stroke-linejoin="round"><rect x="3.2" y="2.2" width="4.6" height="5.6" rx="1.2" fill="#a8a8b0"/><path d="M4.6 4.2 H6.4 M4.6 5.8 H6.4" stroke="#24252c" stroke-width=".8"/><path d="M17.9 5 Q21 2 24.100 5 Q21 8 17.9 5Z"/><circle cx="21" cy="5" r=".9" fill="#a8a8b0"/><path d="M32.6 4 H33.8 L35.6 2.500 V7.500 L33.8 6 H32.6Z"/><path d="M37 3.400 Q38.200 5 37 6.600"/></svg>
<svg class="a" style="left:12px;top:492.7px" width="44" height="10" viewBox="0 0 44 10" fill="none" stroke="#a8a8b0" stroke-width=".8" stroke-linejoin="round"><rect x="3.2" y="2.2" width="4.6" height="5.6" rx="1.2" fill="#a8a8b0"/><path d="M4.6 4.2 H6.4 M4.6 5.8 H6.4" stroke="#24252c" stroke-width=".8"/><path d="M17.9 5 Q21 2 24.100 5 Q21 8 17.9 5Z"/><circle cx="21" cy="5" r=".9" fill="#a8a8b0"/><path d="M32.6 4 H33.8 L35.6 2.500 V7.500 L33.8 6 H32.6Z"/><path d="M37 3.400 Q38.200 5 37 6.600"/></svg>
<svg class="a" style="left:91px;top:447px" width="517.5" height="32.5" viewBox="0 0 517.5 32.5">
<defs>
<g id="fa"><rect width="39.5" height="23" fill="#7e503c"/><rect width="39.5" height="3.600" fill="#8a1a20"/><path d="M9 0h9v3.600h-9zM28 0h9v3.600h-9z" fill="#d8c4b0"/><rect y="3.600" width="39.5" height="2.400" fill="#5a3020"/><rect x="0" y="6" width="7" height="17" fill="#a07a5c"/><rect x="33" y="6" width="6.500" height="17" fill="#8e5c46"/><rect x="9" y="8" width="8" height="7" fill="#6a3a2c"/><rect x="28" y="9" width="4" height="8" fill="#b8543c"/><rect y="19" width="39.5" height="4" fill="#7a5040"/><ellipse cx="23" cy="10.200" rx="2.100" ry="2.400" fill="#b89474"/><path d="M17.800 23 V15.200 Q17.800 12.600 23 12.600 Q28.200 12.600 28.200 15.200 V23Z" fill="#1f9aa2"/></g>
<g id="fb"><rect width="39.5" height="23" fill="#9a5c44"/><rect width="39.5" height="3.600" fill="#8a1a20"/><path d="M5 0h9v3.600h-9zM24 0h9v3.600h-9z" fill="#d8c4b0"/><rect x="27" y="7" width="8" height="8" fill="#e0602c"/><rect x="0" y="6" width="6" height="17" fill="#b08868"/><ellipse cx="19" cy="9.500" rx="3.400" ry="3.800" fill="#c4a284"/><path d="M11 23 V16 Q11 12.800 19 12.800 Q27 12.800 27 16 V23Z" fill="#1f9aa2"/></g>
<g id="fc"><rect width="39.5" height="23" fill="#c8b4a8"/><rect width="39.5" height="7" fill="#c4d0e0"/><path d="M0 9 L8 3 L16 9 V23 H0Z" fill="#b8866a"/><path d="M24 10 L32 4 L39.5 9 V23 H24Z" fill="#a87458"/><rect x="5" y="12" width="3.5" height="11" fill="#1f9aa2"/><rect x="11" y="11" width="3.5" height="12" fill="#c84a6a"/><rect x="17" y="12" width="3.5" height="11" fill="#2a8a7a"/><rect x="25" y="11" width="3.5" height="12" fill="#d890a0"/><rect x="31" y="12" width="3.5" height="11" fill="#1f9aa2"/></g>
<g id="fd"><rect width="39.5" height="23" fill="#865438"/><rect width="39.5" height="2.400" fill="#98121e"/><rect width="24" height="2.400" fill="#a89070"/><rect x="34" y="2.400" width="4" height="20.600" fill="#b49a78"/><rect x="0" y="2.400" width="2" height="20.600" fill="#6a4430"/><rect x="8" y="7" width="6" height="5" fill="#d85a22"/><rect x="28.500" y="8" width="4" height="5" fill="#b8482a"/><rect x="3" y="13" width="8" height="10" fill="#6e4630"/><path d="M16.300 9 Q16.300 3.400 22 3.400 Q27.700 3.400 27.700 9 L28.400 14 H15.600Z" fill="#c8b8a0"/><ellipse cx="22" cy="8.600" rx="3.500" ry="4" fill="#a86c50"/><path d="M18.400 10.200 Q22 12 25.600 10.200 Q25.800 15.500 22 15.800 Q18.200 15.500 18.400 10.200Z" fill="#d8d2c8"/><path d="M11.500 23 Q12 14.400 18.500 13.800 L22 16 L25.500 13.800 Q35 14.400 36 23Z" fill="#1f9aa2"/></g>
<linearGradient id="wf" x1="0" y1="0" x2="0" y2="1"><stop offset="0" stop-color="#a98fdc"/><stop offset="1" stop-color="#b9a2e6"/></linearGradient>
<clipPath id="c1"><rect width="517.5" height="32.5" rx="2.5"/></clipPath>
</defs>
<g clip-path="url(#c1)">
<use href="#fa" x="0.0" y="0"/><use href="#fa" x="39.5" y="0"/><use href="#fa" x="79.0" y="0"/><use href="#fa" x="118.5" y="0"/><use href="#fb" x="158.0" y="0"/><use href="#fc" x="197.5" y="0"/><use href="#fc" x="237.0" y="0"/><use href="#fd" x="276.5" y="0"/><use href="#fd" x="316.0" y="0"/><use href="#fd" x="355.5" y="0"/><use href="#fd" x="395.0" y="0"/><use href="#fd" x="434.5" y="0"/><use href="#fd" x="474.0" y="0"/><use href="#fd" x="513.5" y="0"/>
<rect y="22.800" width="517.5" height="9.700" fill="#5c40b2"/>
<path d="M0 32.500L0.0 29.5L1.8 29.5L3.2 30.5L4.2 29.5L6.0 30.5L7.0 29.5L8.4 30.5L9.4 30.0L11.2 29.5L12.6 30.5L14.4 24.5L16.2 25.5L17.2 24.5L18.2 27.5L20.0 24.5L21.4 26.0L22.8 27.5L24.6 27.5L26.4 28.3L27.8 24.5L29.6 25.5L31.0 28.3L32.4 25.5L34.2 28.3L35.6 27.5L37.4 28.3L38.4 25.5L40.2 25.5L41.6 25.5L43.0 27.0L44.0 24.5L45.8 24.5L46.8 27.5L47.8 25.0L49.2 27.0L50.6 25.5L52.4 27.5L54.2 28.3L55.6 25.5L57.0 26.0L58.0 27.0L59.0 26.5L60.0 25.5L61.0 24.5L62.4 25.0L63.4 27.5L64.8 27.5L66.6 26.5L68.0 27.0L69.0 27.0L70.4 27.5L71.4 28.3L73.2 28.3L74.2 27.5L75.2 27.0L77.0 25.5L78.0 26.5L79.0 25.0L80.4 24.5L82.2 26.0L83.6 27.0L84.6 25.5L85.6 27.5L87.4 27.5L88.4 26.0L89.8 25.0L90.8 25.0L92.6 26.5L94.0 26.5L95.8 26.5L97.2 27.5L99.0 27.5L100.8 27.5L101.8 27.5L103.6 27.0L105.0 25.5L106.4 24.5L107.4 25.5L108.4 28.3L109.4 27.0L110.8 27.0L112.6 25.0L114.0 26.5L115.8 25.5L116.8 27.5L118.2 25.5L119.6 27.5L120.6 24.5L121.6 28.3L123.0 25.0L124.0 24.5L125.0 26.5L126.4 26.0L128.2 26.5L129.2 26.0L130.2 25.0L131.6 26.5L133.4 24.5L134.4 25.0L135.8 28.3L136.8 24.5L138.6 25.5L140.0 25.5L141.8 28.3L143.2 26.5L144.2 25.5L145.6 26.0L147.4 24.5L149.2 26.5L150.6 26.0L151.6 25.0L152.6 27.0L153.6 25.0L155.4 24.5L157.2 27.0L158.6 24.5L160.4 25.5L161.4 25.5L163.2 25.5L164.6 27.0L166.4 26.0L167.8 25.0L169.2 25.0L171.0 25.5L172.8 24.5L174.2 25.5L175.6 24.5L176.6 25.5L178.0 25.0L179.4 24.5L180.8 28.3L181.8 27.5L183.6 26.5L185.0 25.0L186.4 27.5L187.8 27.0L189.6 28.3L190.6 27.0L191.6 27.5L193.0 27.5L194.8 26.0L195.8 26.5L196.8 25.0L198.2 24.5L200.0 24.2L201.4 24.8L202.4 27.0L203.8 26.2L204.8 24.0L206.2 27.0L208.0 24.5L209.8 27.0L211.2 24.2L212.2 26.2L214.0 23.6L215.8 26.2L217.6 24.5L219.0 23.6L220.8 24.8L222.2 27.0L223.2 23.6L224.6 25.5L225.6 23.6L227.4 24.2L228.8 24.2L230.6 24.5L231.6 25.5L232.6 27.0L234.0 24.8L235.8 23.6L237.2 23.6L238.2 25.5L239.6 24.5L241.4 24.8L242.8 25.5L243.8 24.0L245.6 24.0L246.6 27.0L248.0 25.5L249.8 23.6L251.2 24.5L252.6 24.5L254.4 25.5L255.4 24.2L256.4 25.5L257.8 24.2L259.2 24.5L260.6 23.6L262.0 24.2L263.0 27.0L264.4 24.0L265.8 27.0L266.8 25.5L267.8 24.0L268.8 24.8L270.6 24.5L272.4 24.8L273.8 24.8L275.6 27.0L277.0 24.2L278.0 27.0L279.8 26.2L281.6 24.8L283.4 26.2L284.8 24.0L286.6 25.5L288.0 24.8L289.8 26.2L291.6 27.0L292.6 24.0L294.4 24.2L296.2 23.6L298.0 24.0L299.0 23.6L300.8 24.0L302.6 24.2L304.0 24.2L305.8 24.8L306.8 27.0L308.2 24.0L309.6 25.5L311.0 27.0L312.0 24.5L313.4 27.0L315.2 24.5L316.2 25.5L317.6 23.6L319.0 24.8L320.8 23.6L321.8 25.5L322.8 25.5L323.8 26.2L325.2 24.5L326.2 27.0L327.2 27.0L329.0 24.2L330.8 26.2L332.6 25.5L334.4 24.0L335.4 24.0L337.2 24.0L339.0 24.8L340.8 25.5L342.6 25.5L344.4 25.5L346.2 24.8L347.2 24.5L348.2 24.5L350.0 24.5L351.0 25.5L352.0 24.2L353.0 25.5L354.0 24.2L355.4 24.0L356.4 24.0L357.8 24.8L358.8 24.0L360.6 23.6L361.6 25.5L363.4 24.5L364.8 24.2L366.6 24.5L368.4 25.5L369.4 27.0L370.4 23.6L371.4 27.0L372.4 25.5L373.4 24.2L374.4 24.8L375.4 26.2L377.2 24.2L379.0 23.6L380.0 27.0L381.0 24.2L382.4 24.0L383.8 24.0L385.6 24.5L387.0 25.5L388.8 24.5L389.8 23.6L390.8 24.8L392.2 27.0L393.6 24.5L395.0 25.5L396.8 24.8L397.8 23.6L399.2 24.2L401.0 24.0L402.8 25.5L404.6 24.5L406.0 26.2L407.0 24.8L408.4 24.8L409.8 24.5L411.2 24.8L412.6 25.5L414.4 24.8L415.4 24.5L416.8 27.0L417.8 23.6L419.2 23.6L420.2 26.2L422.0 26.2L423.4 25.5L425.2 24.0L427.0 24.8L428.8 24.2L430.2 27.0L432.0 25.5L433.8 24.2L435.2 23.6L436.2 24.2L438.0 25.5L439.4 27.0L440.8 23.6L441.8 24.0L442.8 24.2L444.2 26.2L445.6 24.5L447.4 24.0L449.2 24.2L451.0 27.0L452.8 24.2L454.6 23.6L456.0 24.8L457.4 27.0L458.4 27.0L460.2 23.6L461.6 27.0L463.0 26.2L464.8 24.0L466.6 26.2L468.0 26.2L469.4 26.2L471.2 26.2L473.0 26.2L474.0 23.6L475.0 23.6L476.8 24.8L478.2 24.0L479.2 24.5L481.0 24.0L482.0 24.5L483.0 25.5L484.4 27.0L485.8 25.5L486.8 24.2L488.6 27.0L489.6 25.5L491.4 24.2L492.4 24.0L493.8 24.2L494.8 23.6L496.2 24.8L497.2 24.5L498.6 24.8L500.4 24.0L501.8 26.2L503.6 24.0L505.0 24.8L506.4 24.8L507.4 27.0L508.4 26.2L510.2 24.5L511.6 26.2L513.4 25.5L515.2 26.2L516.2 25.5L517.2 25.5L517.5 32.500Z" fill="#b8a4e6"/>
</g></svg>
<div class="a" style="left:94px;top:449.5px;width:95.5px;height:11px;border-radius:2.5px;background:rgba(40,26,22,.72)"></div>
<svg class="a" style="left:97.600px;top:450.300px" width="22" height="10" viewBox="0 0 22 10"><circle cx="5" cy="5" r="3.2" fill="none" stroke="#e8e8ec" stroke-width=".6" stroke-dasharray="1.2 .7"/><circle cx="5" cy="4.2" r=".9" fill="none" stroke="#e8e8ec" stroke-width=".6"/><path d="M3.4 6.8 Q5 5 6.6 6.8" fill="none" stroke="#e8e8ec" stroke-width=".6"/><rect x="12.4" y="1.4" width="7.2" height="7.2" rx="1.8" fill="#fff"/><path d="M15 3.2 V6.8 L17.8 5Z" fill="#222"/></svg>
<div class="t" style="left:121px;top:450.600px;font-size:7.2px;color:#f4f4f6">0:17 2025-06-04_02</div>
<div class="a" style="left:91px;top:482px;width:146.2px;height:33px;border-radius:3.5px;box-sizing:border-box;border:1px solid #f0f0f4;overflow:hidden;background:#5b3fa8">
<div class="a" style="left:0;top:0;width:146px;height:21.800px;background:radial-gradient(ellipse 9px 7px at 8px 16px,#fff,transparent),radial-gradient(ellipse 10px 6px at 30px 5px,#f5a4c6,transparent),radial-gradient(ellipse 9px 8px at 24px 17px,#fdeef4,transparent),linear-gradient(100deg,#fbd0e0,#f8bcd2 40%,#fbd8e6 70%,#f9c4d8);background-size:39.500px 21.800px"></div>
<div class="a" style="left:0;top:0;width:3.400px;height:33px;background:#4c4454"></div>
<div class="a" style="right:0;top:0;width:3.400px;height:33px;background:#4c4454"></div>
<div class="a" style="left:1.2px;top:11.500px;width:1.2px;height:8.500px;border-radius:1px;background:#fff"></div>
<div class="a" style="right:1.2px;top:11.500px;width:1.2px;height:8.500px;border-radius:1px;background:#fff"></div>
</div>
<div class="a" style="left:98.2px;top:485.4px;width:106px;height:10.300px;border-radius:2.5px;background:rgba(78,62,70,.86)"></div>
<svg class="a" style="left:101px;top:485.5px" width="10" height="10" viewBox="0 0 10 10"><rect x="1.4" y="1.5" width="7.2" height="7.2" rx="2" fill="#fff"/><path d="M4 3.3 V6.900 L6.8 5.100Z" fill="#222"/></svg>
<div class="t" style="left:113.5px;top:485.800px;font-size:7.4px;color:#f4f4f6">0:05 Texture carrée BG 8</div>
<div class="a" style="left:160.700px;top:400px;width:1px;height:125px;background:#e8e8ec"></div>
<svg class="a" style="left:157px;top:394.800px" width="9" height="10" viewBox="0 0 9 10"><path d="M.8 1.800 Q.8 .8 1.800 .8 H6.600 Q7.600 .8 7.600 1.800 V5.600 L4.200 8.600 L.8 5.600Z" fill="#fff"/></svg>
<div class="a" style="left:155.200px;top:413.600px;width:12.600px;height:20px;border-radius:6.300px;background:#fff"></div>
<svg class="a" style="left:155.200px;top:413.600px" width="12.600" height="20" viewBox="0 0 12.600 20" fill="none" stroke="#222" stroke-width=".75" stroke-linecap="round"><path d="M6.300 3.200 V8 M5.200 6.800 L6.300 8.200 L7.400 6.800" stroke-width=".6"/><circle cx="4.300" cy="15.200" r="1.500"/><circle cx="8.300" cy="15.200" r="1.500"/><path d="M5.100 14 L8.600 8 M7.500 14 L4 8"/></svg>
<svg class="a" style="left:195px;top:240px" width="30" height="270" viewBox="0 0 30 270"><path d="M10.700 8 L11.800 8 L13.500 105 L15.300 180 L16.600 200 L18 257 L12.300 257 Z" fill="#e5493b"/><path d="M10.200 255.400 Q15.400 258.800 20.500 255.400 L15.700 265 Z" fill="#e5493b" stroke="#e5493b" stroke-width=".5" stroke-linejoin="round"/></svg>
</body></html>
